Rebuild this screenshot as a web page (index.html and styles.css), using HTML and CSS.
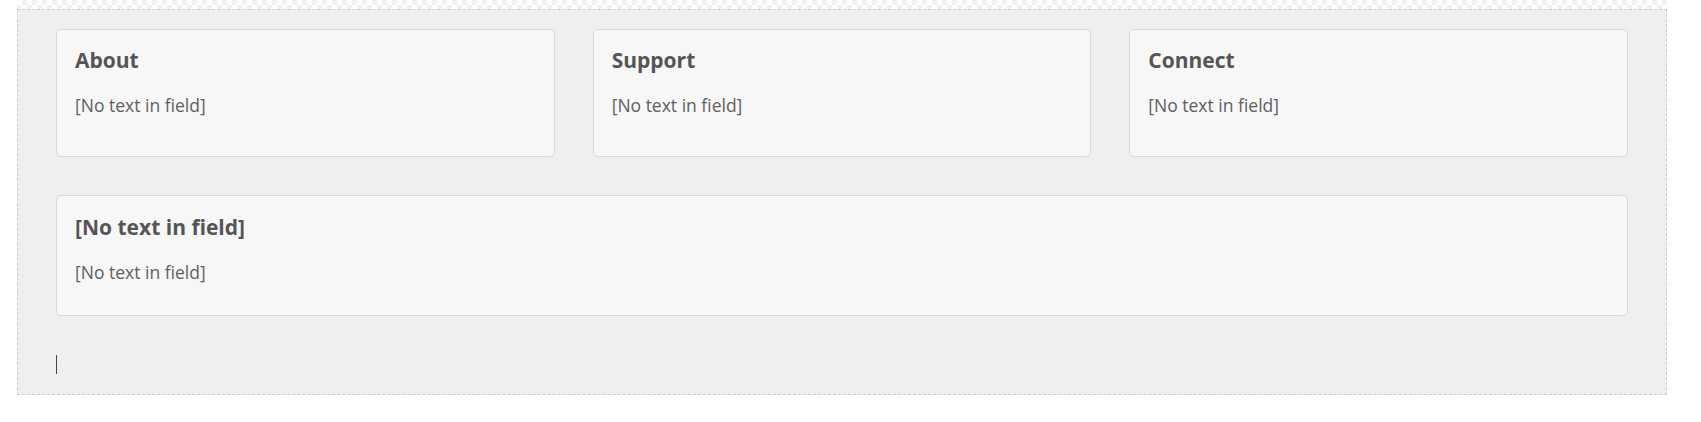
FILE: index.html
```html
<!DOCTYPE html>
<html>
<head>
<meta charset="utf-8">
<link rel="stylesheet" href="styles.css">
</head>
<body>
<div class="page">
  <div class="strip"></div>
  <div class="zone">
    <div class="grid">
      <div class="card card-top">
        <h3 class="card-title">About</h3>
        <p class="card-text">[No text in field]</p>
      </div>
      <div class="card card-top">
        <h3 class="card-title">Support</h3>
        <p class="card-text">[No text in field]</p>
      </div>
      <div class="card card-top">
        <h3 class="card-title">Connect</h3>
        <p class="card-text">[No text in field]</p>
      </div>
      <div class="card card-wide">
        <h3 class="card-title">[No text in field]</h3>
        <p class="card-text">[No text in field]</p>
      </div>
    </div>
    <div class="caret-line"><span class="caret"></span></div>
  </div>
</div>
</body>
</html>
```

FILE: styles.css
```css
html, body {
  margin: 0;
  padding: 0;
  background: #ffffff;
}

body {
  font-family: "Open Sans", "Liberation Sans", sans-serif;
  color: #555555;
}

.page {
  margin-left: 17px;
  width: 1650px;
}

.strip {
  height: 9px;
  background-color: #ffffff;
  background-image:
    linear-gradient(45deg, #f1f1f1 25%, transparent 25%, transparent 75%, #f1f1f1 75%),
    linear-gradient(45deg, #f1f1f1 25%, transparent 25%, transparent 75%, #f1f1f1 75%);
  background-size: 10px 10px;
  background-position: 0 0, 5px 5px;
}

.zone {
  border: 1px dashed #cfcfcf;
  background: #efefef;
  padding: 19px 38px 20px 38px;
}

.grid {
  display: grid;
  grid-template-columns: repeat(3, 1fr);
  column-gap: 38px;
  row-gap: 38px;
}

.card {
  background: #f7f7f7;
  border: 1px solid #d9d9d9;
  border-radius: 5px;
  padding: 16px 18px 38px 18px;
}

.card-wide {
  grid-column: 1 / span 3;
  padding-top: 17px;
  padding-bottom: 30px;
}

.card-title {
  margin: 0;
  font-size: 21px;
  line-height: 28px;
  font-weight: 700;
  color: #555555;
}

.card-text {
  margin: 18px 0 0 0;
  font-size: 17.5px;
  line-height: 26px;
  color: #606060;
}

.caret-line {
  height: 19px;
  margin-top: 39px;
  display: flex;
}

.caret {
  display: block;
  width: 1px;
  height: 19px;
  background: #444444;
}
```
